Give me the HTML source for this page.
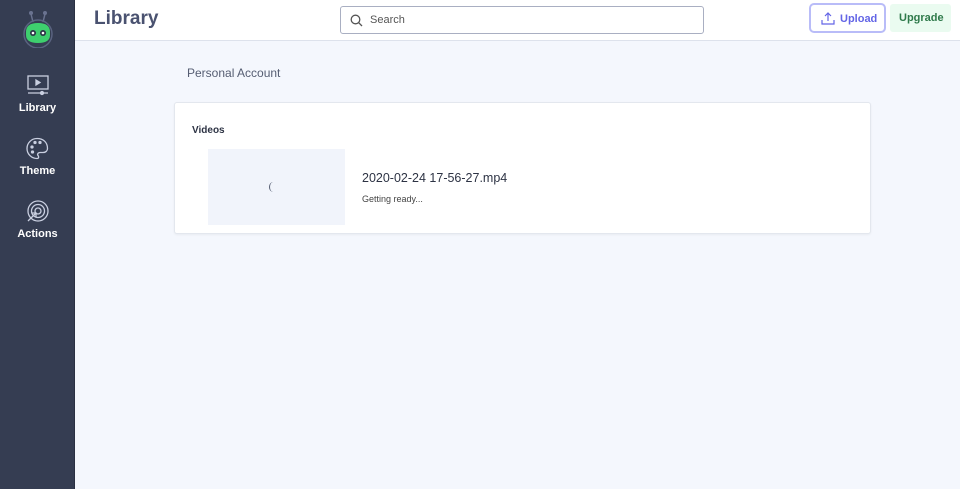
<!DOCTYPE html>
<html><head><style>
*{box-sizing:border-box;margin:0;padding:0}
body{width:960px;height:489px;overflow:hidden;background:#f4f7fd;font-family:"Liberation Sans",sans-serif;position:relative}
.side{position:absolute;left:0;top:0;width:75px;height:489px;background:#353d52;border-right:1px solid #2a3042}
.nav{position:absolute;left:0;width:75px;text-align:center;color:#fff;font-size:11px;font-weight:bold}
.top{position:absolute;left:75px;top:0;right:0;height:41px;background:#fff;border-bottom:1px solid #dde2ec}
.title{position:absolute;left:19px;top:8px;font-size:19px;color:#4a5270;font-weight:bold}
.search{position:absolute;left:265px;top:6px;width:364px;height:28px;border:1px solid #a9afc2;border-radius:3px}
.search span{position:absolute;left:29px;top:7px;font-size:11px;color:#555}
.up{position:absolute;left:734px;top:3px;width:77px;height:30px;border:2px solid #b9bcf8;border-radius:5px;color:#6365e6;font-size:11px;font-weight:bold;padding:8px 0 0 29px}
.upg{position:absolute;left:815px;top:4px;width:61px;height:28px;background:#eafbf0;color:#2f7a4b;font-size:11px;font-weight:bold;padding:8px 0 0 9px;border-radius:3px}
.card{position:absolute;left:174px;top:102px;width:697px;height:132px;background:#fff;border:1px solid #e3e7ee;border-radius:3px;box-shadow:0 1px 2px rgba(0,0,0,.05)}
</style></head><body>
<div class="side">
<svg style="position:absolute;left:20px;top:10px" width="36" height="38" viewBox="0 0 36 38"><line x1="11" y1="4" x2="13" y2="12" stroke="#6a7390" stroke-width="1.5"/><line x1="25" y1="4" x2="23" y2="12" stroke="#6a7390" stroke-width="1.5"/><circle cx="11" cy="3" r="2" fill="#6a7390"/><circle cx="25" cy="3" r="2" fill="#6a7390"/><circle cx="18" cy="24" r="14" fill="none" stroke="#5a6380" stroke-width="1.5"/><path d="M6 22q0-9 12-9t12 9v3q0 8-12 8t-12-8z" fill="#3ecf6e"/><circle cx="13" cy="23" r="3" fill="#2b3346"/><circle cx="23" cy="23" r="3" fill="#2b3346"/><circle cx="13" cy="23" r="1.3" fill="#fff"/><circle cx="23" cy="23" r="1.3" fill="#fff"/></svg>
<svg style="position:absolute;left:27px;top:75px" width="22" height="22" viewBox="0 0 22 22" fill="none" stroke="#c9cfe0" stroke-width="1.3"><rect x="1" y="1" width="20" height="13"/><path d="M9 5l4 2.5-4 2.5z" fill="#c9cfe0"/><line x1="1" y1="18" x2="21" y2="18"/><circle cx="15" cy="18" r="1.5" fill="#c9cfe0"/></svg>
<div class="nav" style="top:102px">Library</div>
<svg style="position:absolute;left:26px;top:137px" width="23" height="23" viewBox="0 0 23 23" fill="none" stroke="#c9cfe0" stroke-width="1.3"><path d="M11 1.5a10 10 0 1 0 0 20c2 0 2-2 1-3s0-3 2-3h3c3 0 4.5-2 4.5-4C21.5 5 17 1.5 11 1.5z"/><circle cx="6" cy="10" r="1" fill="#c9cfe0"/><circle cx="9" cy="5.5" r="1" fill="#c9cfe0"/><circle cx="14" cy="5.5" r="1" fill="#c9cfe0"/><circle cx="6.5" cy="15" r="1" fill="#c9cfe0"/></svg>
<div class="nav" style="top:165px">Theme</div>
<svg style="position:absolute;left:26px;top:200px" width="23" height="23" viewBox="0 0 23 23" fill="none" stroke="#c9cfe0" stroke-width="1.3"><circle cx="12" cy="11" r="10"/><circle cx="12" cy="11" r="6.5"/><circle cx="12" cy="11" r="3"/><path d="M2 21l8-8M6 13h4v4"/></svg>
<div class="nav" style="top:228px">Actions</div>
</div>
<div class="top">
<div class="title">Library</div>
<div class="search"><svg style="position:absolute;left:9px;top:7px" width="13" height="13" viewBox="0 0 13 13" fill="none" stroke="#555" stroke-width="1.3"><circle cx="5.5" cy="5.5" r="4.3"/><line x1="8.7" y1="8.7" x2="12" y2="12"/></svg><span>Search</span></div>
<div class="up"><svg style="position:absolute;left:10px;top:7px" width="14" height="13" viewBox="0 0 14 13" fill="none" stroke="#6365e6" stroke-width="1.2"><path d="M7 9V1M4 4l3-3 3 3M1 8v4h12V8"/></svg>Upload</div>
<div class="upg">Upgrade</div>
</div>
<div style="position:absolute;left:187px;top:66px;font-size:12px;color:#555d72">Personal Account</div>
<div class="card">
<div style="position:absolute;left:17px;top:22px;font-size:10px;font-weight:bold;color:#2d3344">Videos</div>
<div style="position:absolute;left:33px;top:46px;width:137px;height:76px;background:#f1f4fb"><div style="position:absolute;left:61px;top:33px;width:8px;height:10px;border-left:1.5px solid #555d72;border-radius:50%"></div></div>
<div style="position:absolute;left:187px;top:68px;font-size:12.5px;color:#2d3344">2020-02-24 17-56-27.mp4</div>
<div style="position:absolute;left:187px;top:91px;font-size:9px;color:#444">Getting ready...</div>
</div>
</body></html>
